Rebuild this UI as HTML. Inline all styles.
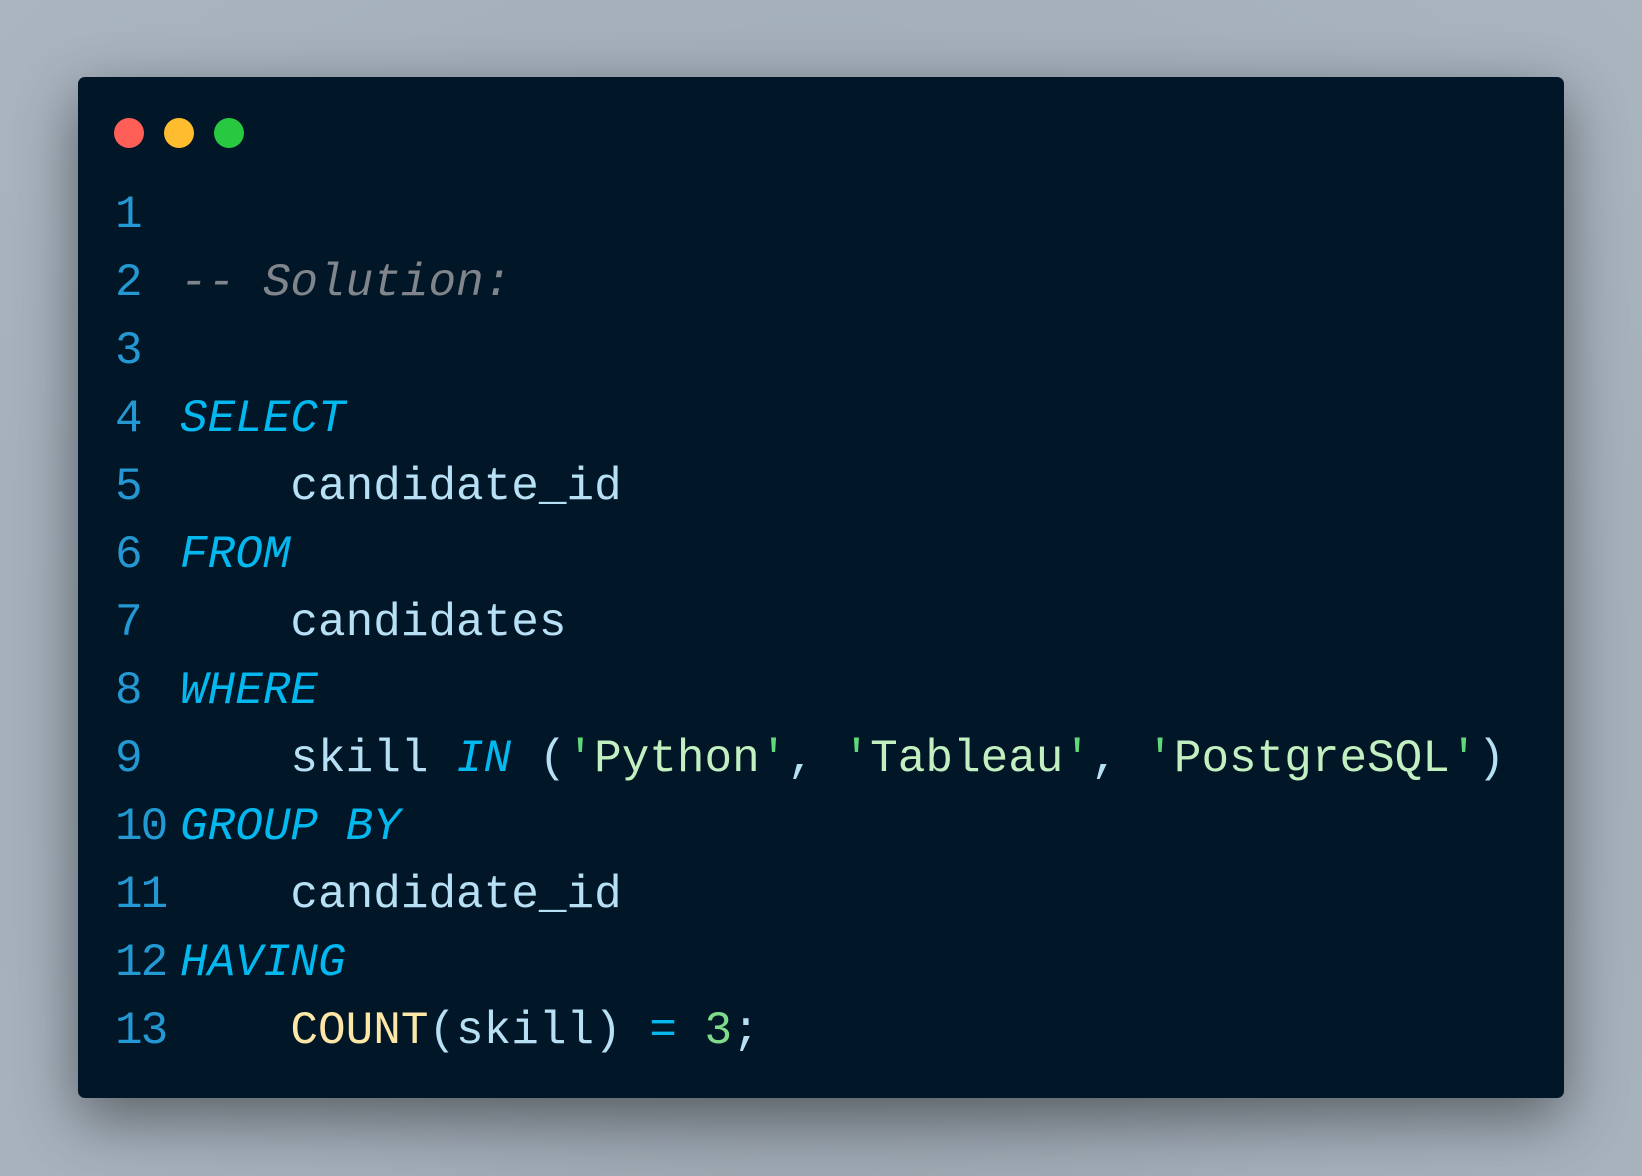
<!DOCTYPE html>
<html><head><meta charset="utf-8"><style>
html,body{margin:0;padding:0}
body{width:1642px;height:1176px;overflow:hidden;background:radial-gradient(ellipse at 50% 60%,#8a949e 0%,#a3aeb9 60%,#aab5c0 100%);position:relative;font-family:"Liberation Mono","DejaVu Sans Mono",monospace}
.win{position:absolute;left:78px;top:77px;width:1486px;height:1021px;background:#011627;border-radius:7px;box-shadow:0 20px 60px rgba(0,0,0,.45)}
.dot{position:absolute;top:118px;width:30px;height:30px;border-radius:50%}
.l{position:absolute;left:0;height:68px;line-height:68px;font-size:46px;white-space:pre;color:#b8e0f5}
.n{position:absolute;left:115px;color:#2398d2;letter-spacing:-2px}
.c{position:absolute;left:180px}
.k{color:#03b8ef;font-style:italic}
.cm{color:#7f858a;font-style:italic}
.s{color:#c3f0c0}.q{color:#5fd97a}
.f{color:#fde7a7}.num{color:#7fdb8a}.op{color:#03b8ef}
</style></head><body>
<div class="win"></div>
<div class="dot" style="left:114px;background:#ff5f57"></div>
<div class="dot" style="left:164px;background:#febc2e"></div>
<div class="dot" style="left:214px;background:#28c840"></div>
<div class="l" style="top:181px"><span class="n">1</span></div>
<div class="l" style="top:249px"><span class="n">2</span><span class="c cm">-- Solution:</span></div>
<div class="l" style="top:317px"><span class="n">3</span></div>
<div class="l" style="top:385px"><span class="n">4</span><span class="c k">SELECT</span></div>
<div class="l" style="top:453px"><span class="n">5</span><span class="c">    candidate_id</span></div>
<div class="l" style="top:521px"><span class="n">6</span><span class="c k">FROM</span></div>
<div class="l" style="top:589px"><span class="n">7</span><span class="c">    candidates</span></div>
<div class="l" style="top:657px"><span class="n">8</span><span class="c k">WHERE</span></div>
<div class="l" style="top:725px"><span class="n">9</span><span class="c">    skill <span class="k">IN</span> (<span class="q">'</span><span class="s">Python</span><span class="q">'</span>, <span class="q">'</span><span class="s">Tableau</span><span class="q">'</span>, <span class="q">'</span><span class="s">PostgreSQL</span><span class="q">'</span>)</span></div>
<div class="l" style="top:793px"><span class="n">10</span><span class="c k">GROUP BY</span></div>
<div class="l" style="top:861px"><span class="n">11</span><span class="c">    candidate_id</span></div>
<div class="l" style="top:929px"><span class="n">12</span><span class="c k">HAVING</span></div>
<div class="l" style="top:997px"><span class="n">13</span><span class="c">    <span class="f">COUNT</span>(skill) <span class="op">=</span> <span class="num">3</span>;</span></div>
</body></html>
